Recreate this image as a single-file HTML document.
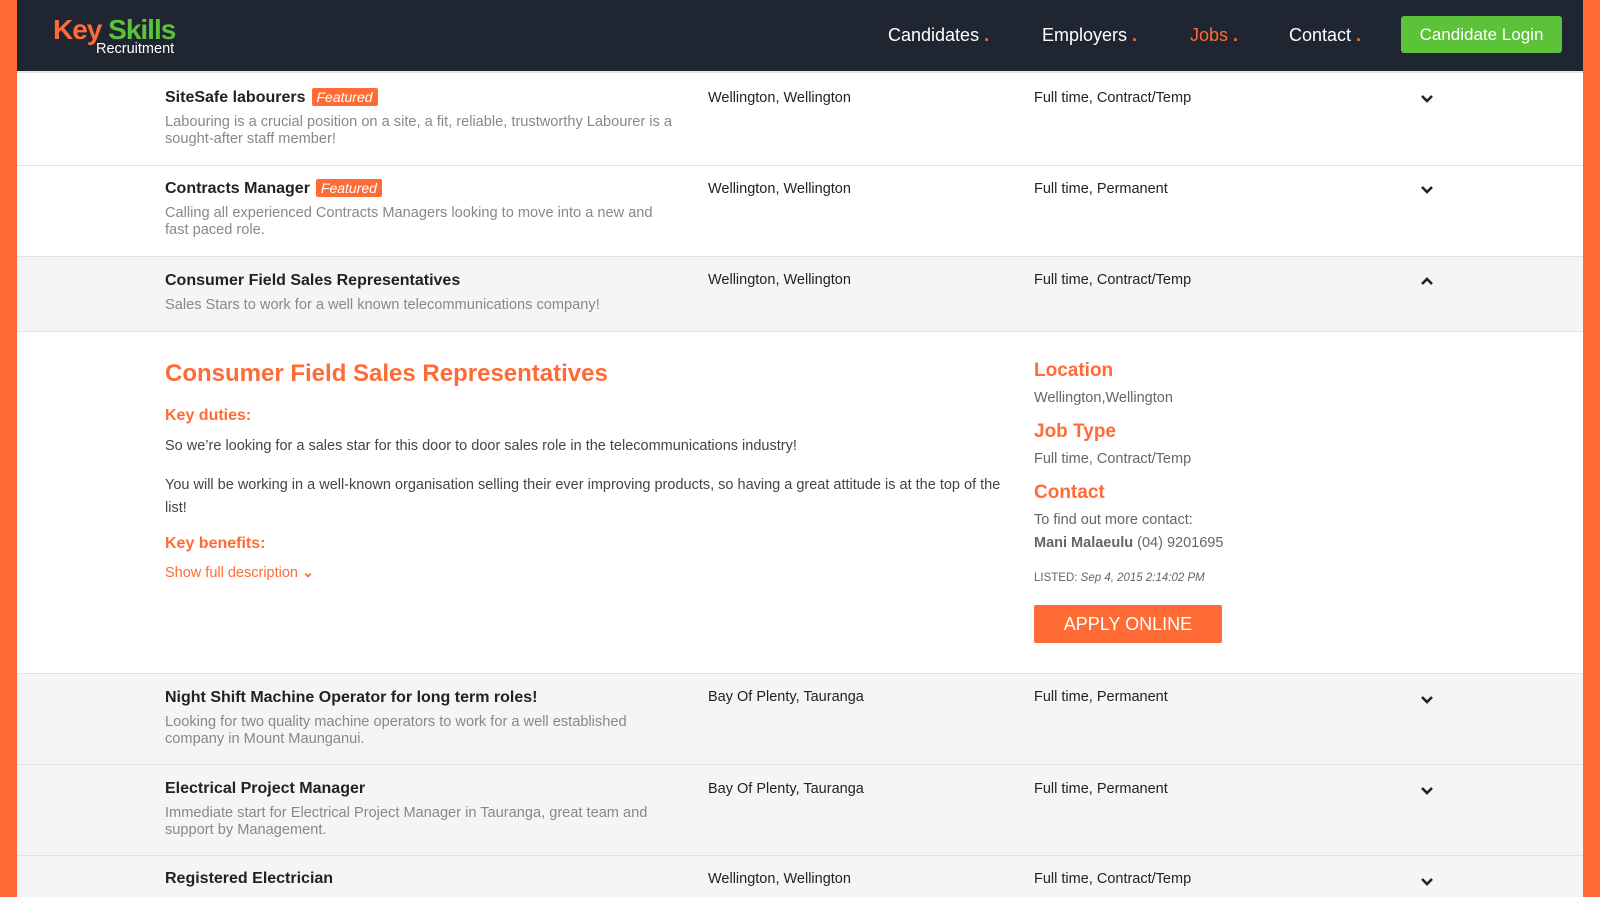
<!DOCTYPE html>
<html><head><meta charset="utf-8"><style>
*{margin:0;padding:0;box-sizing:border-box}
body{width:1600px;height:897px;overflow:hidden;background:#ff6b35;font-family:"Liberation Sans",sans-serif;position:relative}
.main{position:absolute;left:17px;top:0;width:1566px;height:897px;background:#fff;overflow:hidden}
.hdr{position:absolute;left:0;top:0;width:1566px;height:73px;background:#1f2631;border-bottom:2px solid #e3e3e3}
.a{position:absolute;white-space:nowrap}
.nav{color:#fff;font-size:18px;top:25px}
.nav i{color:#ff6b35;font-style:normal;font-weight:bold}
.row{position:absolute;left:0;width:1566px;border-bottom:1px solid #e2e2e2}
.t{font-weight:bold;font-size:16px;color:#222}
.d{font-size:14.6px;color:#888;line-height:17px}
.c{font-size:14.5px;color:#222}
.feat{background:#ff6b35;color:#fff;font-style:italic;font-size:14px;padding:1px 5px;border-radius:2px;margin-left:6px;font-weight:normal}
.o{color:#ff6b35;font-weight:bold}
.g{color:#666;font-size:14.5px}
</style></head><body>
<div class="main">
<div class="hdr">
 <div class="a" style="left:36px;top:14px;font-size:28px;font-weight:bold;letter-spacing:-1px"><span style="color:#ff6b35">Key</span> <span style="color:#5cc23a">Skills</span></div>
 <div class="a" style="left:79px;top:41px;font-size:14.5px;color:#fff">Recruitment</div>
 <div class="a nav" style="left:871px">Candidates <i>.</i></div>
 <div class="a nav" style="left:1025px">Employers <i>.</i></div>
 <div class="a nav" style="left:1173px;color:#ff6b35">Jobs <i>.</i></div>
 <div class="a nav" style="left:1272px">Contact <i>.</i></div>
 <div class="a" style="left:1384px;top:16px;width:161px;height:37px;background:#5cc23a;border-radius:3px;color:#fff;font-size:17px;text-align:center;line-height:37px">Candidate Login</div>
</div>

<div class="row" style="top:75px;height:91px;background:#fff"></div>
<div class="a t" style="left:148px;top:89px">SiteSafe labourers<span class="feat">Featured</span></div>
<div class="a d" style="left:148px;top:114px">Labouring is a crucial position on a site, a fit, reliable, trustworthy Labourer is a<br>sought-after staff member!</div>
<div class="a c" style="left:691px;top:90px">Wellington, Wellington</div>
<div class="a c" style="left:1017px;top:90px">Full time, Contract/Temp</div>

<div class="row" style="top:166px;height:91px;background:#fff"></div>
<div class="a t" style="left:148px;top:180px">Contracts Manager<span class="feat">Featured</span></div>
<div class="a d" style="left:148px;top:205px">Calling all experienced Contracts Managers looking to move into a new and<br>fast paced role.</div>
<div class="a c" style="left:691px;top:181px">Wellington, Wellington</div>
<div class="a c" style="left:1017px;top:181px">Full time, Permanent</div>

<div class="row" style="top:257px;height:75px;background:#f5f5f5"></div>
<div class="a t" style="left:148px;top:272px">Consumer Field Sales Representatives</div>
<div class="a d" style="left:148px;top:297px">Sales Stars to work for a well known telecommunications company!</div>
<div class="a c" style="left:691px;top:272px">Wellington, Wellington</div>
<div class="a c" style="left:1017px;top:272px">Full time, Contract/Temp</div>

<div class="row" style="top:332px;height:342px;background:#fff"></div>
<div class="a o" style="left:148px;top:360px;font-size:24px">Consumer Field Sales Representatives</div>
<div class="a o" style="left:148px;top:407px;font-size:16px">Key duties:</div>
<div class="a g" style="left:148px;top:438px;color:#444">So we’re looking for a sales star for this door to door sales role in the telecommunications industry!</div>
<div class="a g" style="left:148px;top:474px;color:#444;line-height:23px;white-space:normal;width:860px">You will be working in a well-known organisation selling their ever improving products, so having a great attitude is at the top of the list!</div>
<div class="a o" style="left:148px;top:535px;font-size:16px">Key benefits:</div>
<div class="a" style="left:148px;top:565px;font-size:14.5px;color:#ff6b35">Show full description <b>⌄</b></div>

<div class="a o" style="left:1017px;top:360px;font-size:19px">Location</div>
<div class="a g" style="left:1017px;top:390px">Wellington,Wellington</div>
<div class="a o" style="left:1017px;top:421px;font-size:19px">Job Type</div>
<div class="a g" style="left:1017px;top:451px">Full time, Contract/Temp</div>
<div class="a o" style="left:1017px;top:482px;font-size:19px">Contact</div>
<div class="a g" style="left:1017px;top:512px">To find out more contact:</div>
<div class="a g" style="left:1017px;top:535px"><b>Mani Malaeulu</b> (04) 9201695</div>
<div class="a" style="left:1017px;top:572px;font-size:11.5px;color:#666">LISTED: <i>Sep 4, 2015 2:14:02 PM</i></div>
<div class="a" style="left:1017px;top:605px;width:188px;height:38px;background:#ff6b35;border-radius:2px;color:#fff;font-size:18px;text-align:center;line-height:38px">APPLY ONLINE</div>

<div class="row" style="top:674px;height:91px;background:#f5f5f5"></div>
<div class="a t" style="left:148px;top:689px">Night Shift Machine Operator for long term roles!</div>
<div class="a d" style="left:148px;top:714px">Looking for two quality machine operators to work for a well established<br>company in Mount Maunganui.</div>
<div class="a c" style="left:691px;top:689px">Bay Of Plenty, Tauranga</div>
<div class="a c" style="left:1017px;top:689px">Full time, Permanent</div>

<div class="row" style="top:765px;height:91px;background:#f5f5f5"></div>
<div class="a t" style="left:148px;top:780px">Electrical Project Manager</div>
<div class="a d" style="left:148px;top:805px">Immediate start for Electrical Project Manager in Tauranga, great team and<br>support by Management.</div>
<div class="a c" style="left:691px;top:781px">Bay Of Plenty, Tauranga</div>
<div class="a c" style="left:1017px;top:781px">Full time, Permanent</div>

<div class="row" style="top:856px;height:60px;background:#f5f5f5"></div>
<div class="a t" style="left:148px;top:870px">Registered Electrician</div>
<div class="a c" style="left:691px;top:871px">Wellington, Wellington</div>
<div class="a c" style="left:1017px;top:871px">Full time, Contract/Temp</div>

<svg class="a" style="left:0;top:0" width="1566" height="897" fill="none" stroke="#222" stroke-width="2.6">
<path d="M1405 96l5 5 5-5"/><path d="M1405 187l5 5 5-5"/><path d="M1405 284l5-5 5 5"/>
<path d="M1405 697l5 5 5-5"/><path d="M1405 788l5 5 5-5"/><path d="M1405 879l5 5 5-5"/>
</svg>
</div>
</body></html>
